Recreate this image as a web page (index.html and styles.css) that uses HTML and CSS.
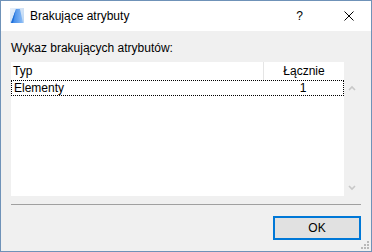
FILE: index.html
```html
<!DOCTYPE html>
<html>
  <head>
    <meta charset="UTF-8">
    <title>Brakujące atrybuty</title>
    <link rel="stylesheet" href="styles.css">
  </head>
  <body>
    <div class="window">
      <div class="titlebar">
        <svg class="app-icon" width="14" height="15" viewBox="0 0 14 15">
          <defs>
            <linearGradient id="bg" x1="0" y1="0" x2="1" y2="1">
              <stop offset="0" stop-color="#e8f1fb"/>
              <stop offset="1" stop-color="#b9d4f2"/>
            </linearGradient>
            <linearGradient id="fg" x1="0" y1="0" x2="1" y2="0">
              <stop offset="0" stop-color="#2f7fe6"/>
              <stop offset="1" stop-color="#8dbdf5"/>
            </linearGradient>
          </defs>
          <rect x="0" y="0" width="14" height="15" fill="url(#bg)"/>
          <path d="M1 15 L6 1 L10 1 L13 15 Z" fill="url(#fg)"/>
          <path d="M6 1 L3 15 L1 15 Z" fill="#1f6fd8"/>
        </svg>
        <span class="title">Brakujące atrybuty</span>
        <span class="help">?</span>
        <svg class="close" width="10" height="10" viewBox="0 0 10 10">
          <path d="M0.5 0.5 L9.5 9.5 M9.5 0.5 L0.5 9.5" stroke="#000" stroke-width="1"/>
        </svg>
      </div>
      <div class="content">
        <div class="caption">Wykaz brakujących atrybutów:</div>
        <div class="list">
          <div class="table">
            <div class="head">
              <div class="col-type">Typ</div>
              <div class="col-count">Łącznie</div>
            </div>
            <div class="row">
              <div class="col-type">Elementy</div>
              <div class="col-count">1</div>
            </div>
          </div>
          <div class="scrollbar">
            <div class="gap"></div>
            <svg class="arrow" width="16" height="17" viewBox="0 0 16 17">
              <path d="M5 10 L8 7 L11 10" fill="none" stroke="#c8c8c8" stroke-width="1.6"/>
            </svg>
            <div class="track"></div>
            <svg class="arrow" width="16" height="17" viewBox="0 0 16 17">
              <path d="M5 7 L8 10 L11 7" fill="none" stroke="#c8c8c8" stroke-width="1.6"/>
            </svg>
          </div>
        </div>
        <div class="separator"></div>
        <div class="buttons">
          <button class="ok">OK</button>
        </div>
      </div>
      <svg class="grip" width="9" height="9" viewBox="0 0 9 9">
        <rect x="6" y="0" width="2" height="2" fill="#b8b8b8"/>
        <rect x="3" y="3" width="2" height="2" fill="#b8b8b8"/>
        <rect x="6" y="3" width="2" height="2" fill="#b8b8b8"/>
        <rect x="0" y="6" width="2" height="2" fill="#b8b8b8"/>
        <rect x="3" y="6" width="2" height="2" fill="#b8b8b8"/>
        <rect x="6" y="6" width="2" height="2" fill="#b8b8b8"/>
      </svg>
    </div>
  </body>
</html>
```

FILE: styles.css
```css
body {
  margin: 0;
  font-family: "Liberation Sans", Arial, sans-serif;
  font-size: 12px;
  color: #000;
}

.window {
  position: relative;
  width: 372px;
  height: 252px;
  box-sizing: border-box;
  border: 1px solid #6f92b8;
  background-color: #f0f0f0;
  display: flex;
  flex-direction: column;
}

.titlebar {
  height: 30px;
  background-color: #fff;
  display: flex;
  align-items: center;
  padding-left: 9px;
}

.app-icon {
  margin-top: -1px;
}

.title {
  margin-left: 6px;
  flex: 1;
}

.help {
  margin-right: 41px;
}

.close {
  margin-right: 17px;
}

.content {
  flex: 1;
  padding: 9px 10px 0 10px;
  display: flex;
  flex-direction: column;
}

.caption {
  line-height: 16px;
}

.list {
  margin-top: 6px;
  height: 134px;
  display: flex;
}

.table {
  width: 333px;
  background-color: #fff;
}

.head,
.row {
  display: flex;
}

.head {
  height: 18px;
  line-height: 18px;
}

.row {
  height: 16px;
  line-height: 14px;
  border: 1px dotted #000;
  box-sizing: border-box;
}

.col-type {
  flex: 1;
  padding-left: 2px;
}

.col-count {
  width: 80px;
  text-align: center;
}

.head .col-count {
  border-left: 1px solid #e5e5e5;
}

.scrollbar {
  flex: 1;
  display: flex;
  flex-direction: column;
}

.gap {
  height: 18px;
}

.track {
  flex: 1;
}

.separator {
  margin-top: 8px;
  height: 1px;
  background-color: #a0a0a0;
}

.buttons {
  display: flex;
  justify-content: flex-end;
  margin-top: 11px;
}

.ok {
  width: 88px;
  height: 24px;
  border: 2px solid #0078d7;
  background-color: #e1e1e1;
  font-family: "Liberation Sans", Arial, sans-serif;
  font-size: 12px;
  padding: 0;
}

.grip {
  position: absolute;
  right: 1px;
  bottom: 1px;
}
```
